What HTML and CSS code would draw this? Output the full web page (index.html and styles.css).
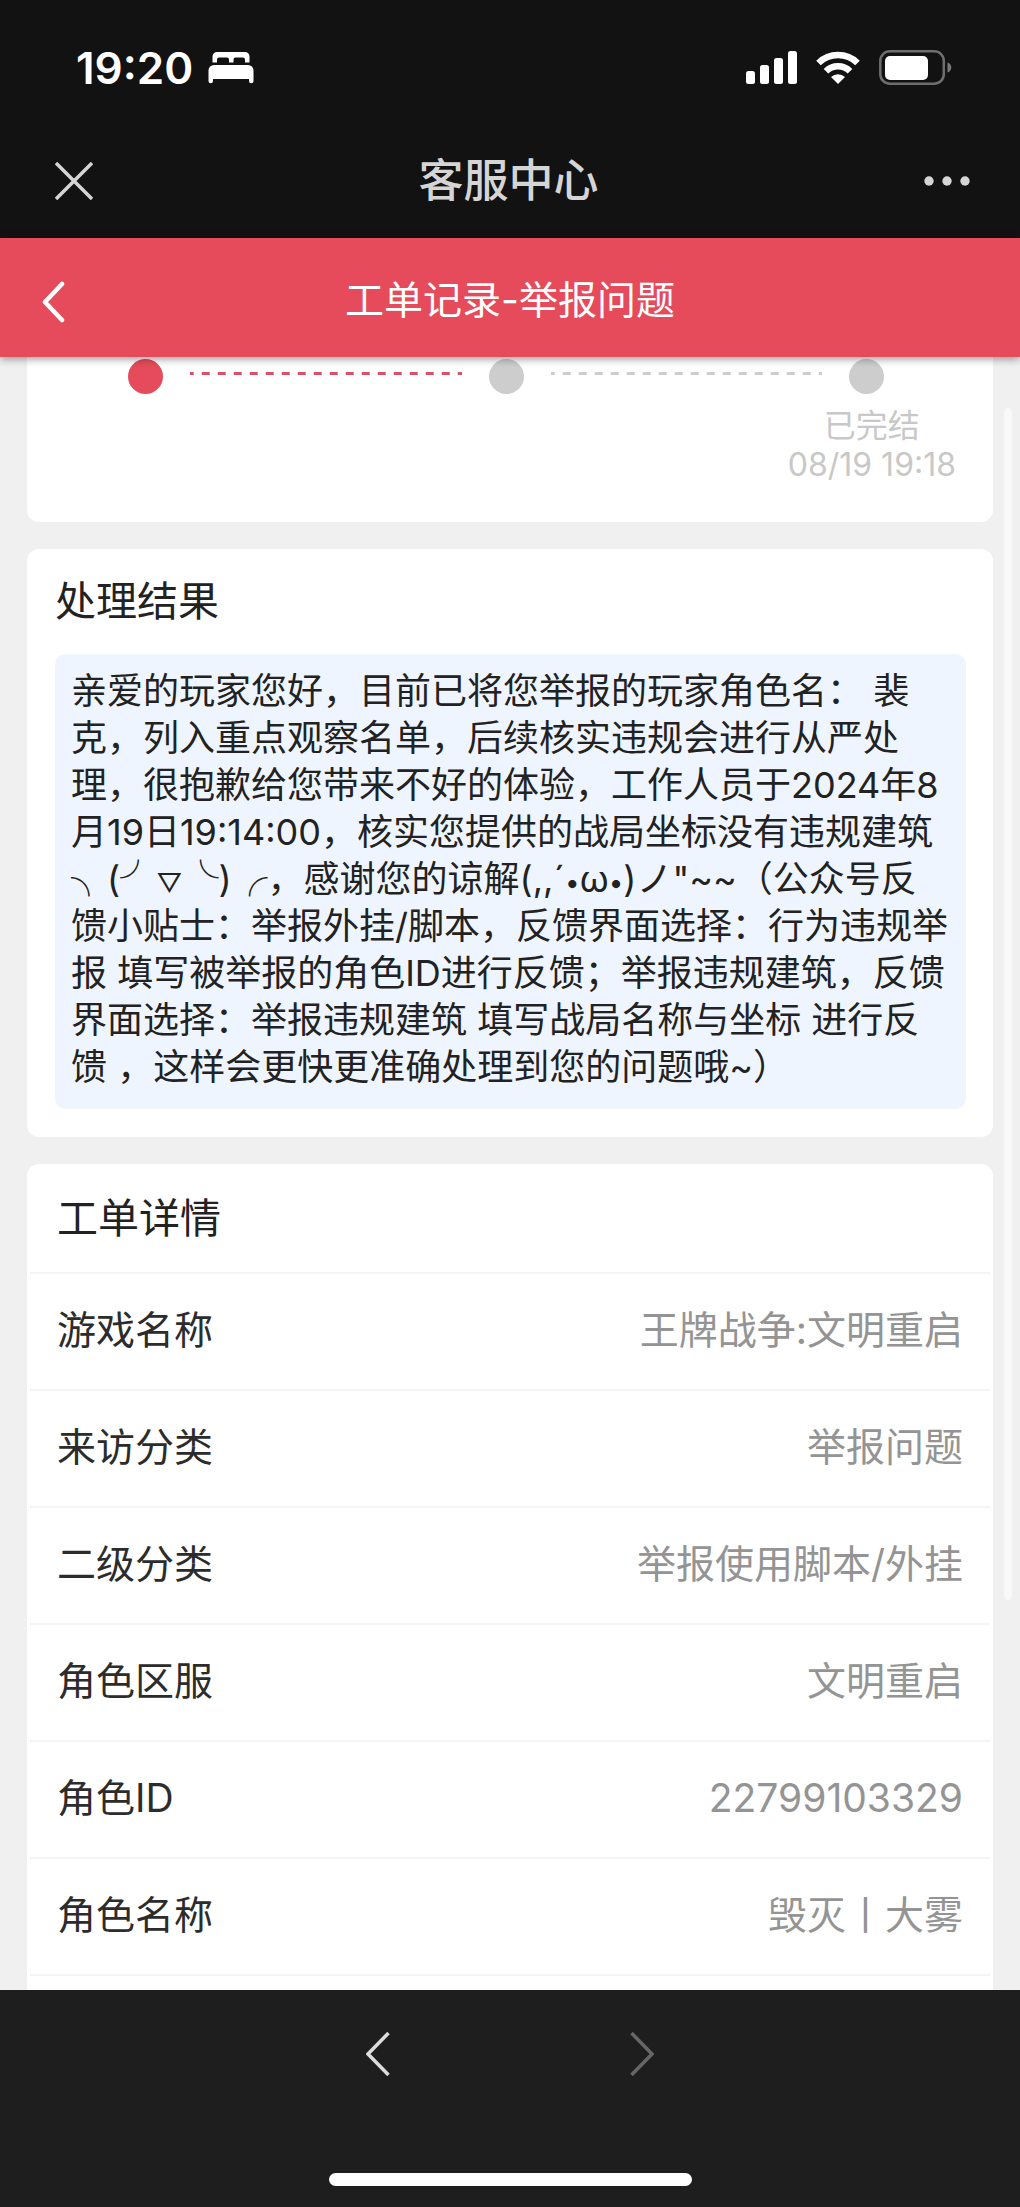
FILE: index.html
```html
<!DOCTYPE html>
<html lang="zh-CN">
<head>
  <meta charset="UTF-8">
  <meta name="viewport" content="width=device-width, initial-scale=1.0">
  <title>客服中心</title>
  <link rel="stylesheet" href="styles.css">
</head>
<body>

  <div class="status-bar">
    <div class="status-left">
      <span class="time">19:20</span>
      <svg width="46" height="32" viewBox="0 0 46 32" fill="#fff">
        <path d="M9 0h28a4.500 4.500 0 0 1 4.500 4.500V10.500H37V7.500a2 2 0 0 0-2-2H27.500a2 2 0 0 0-2 2v3h-4.500v-3a2 2 0 0 0-2-2H11a2 2 0 0 0-2 2v3H4.500V4.500A4.500 4.500 0 0 1 9 0z"/>
        <path d="M6 13h34a5.500 5.500 0 0 1 5.500 5.500V29a2.200 2.200 0 0 1-4.500 0v-2H5v2a2.200 2.200 0 0 1-4.500 0V18.500A5.500 5.500 0 0 1 6 13z"/>
      </svg>
    </div>
    <div class="status-right">
      <svg width="51" height="33" viewBox="0 0 51 33" fill="#fff">
        <rect x="0" y="20" width="9" height="13" rx="2.500"/>
        <rect x="14" y="14" width="9" height="19" rx="2.500"/>
        <rect x="28" y="7" width="9" height="26" rx="2.500"/>
        <rect x="42" y="0" width="9" height="33" rx="2.500"/>
      </svg>
      <svg width="44" height="33" viewBox="0 0 44 33" fill="none" stroke="#fff">
        <path d="M2.500 12A28 28 0 0 1 41.500 12" stroke-width="6.500"/>
        <path d="M10 20.200A17 17 0 0 1 34 20.200" stroke-width="6.500"/>
        <path d="M22 33l-7-7a10.500 10.500 0 0 1 14 0z" fill="#fff" stroke="none"/>
      </svg>
      <svg width="73" height="35" viewBox="0 0 73 35">
        <rect x="1.300" y="1.300" width="63.500" height="32.400" rx="9.500" fill="none" stroke="#6e6e6e" stroke-width="2.500"/>
        <rect x="6" y="6" width="43" height="24" rx="5" fill="#fff"/>
        <path d="M68.500 12.500c5 1.500 5 8.500 0 10z" fill="#7a7a7a"/>
      </svg>
    </div>
  </div>

  <div class="nav-bar">
    <button type="button" aria-label="关闭">
      <svg width="38" height="38" viewBox="0 0 38 38" stroke="#d5d5d5" stroke-width="3.500">
        <path d="M1 1l36 36M37 1L1 37"/>
      </svg>
    </button>
    <h1>客服中心</h1>
    <button type="button" aria-label="更多">
      <svg width="46" height="10" viewBox="0 0 46 10" fill="#d5d5d5">
        <circle cx="5" cy="5" r="4.700"/>
        <circle cx="23" cy="5" r="4.700"/>
        <circle cx="41" cy="5" r="4.700"/>
      </svg>
    </button>
  </div>

  <header class="page-header">
    <button type="button" aria-label="返回">
      <svg width="24" height="42" viewBox="0 0 24 42" fill="none" stroke="#fff" stroke-width="4.500" stroke-linecap="round" stroke-linejoin="round">
        <path d="M20 3L3 21l17 18"/>
      </svg>
    </button>
    <h2>工单记录-举报问题</h2>
  </header>

  <main class="content">
    <!-- 进度 -->
    <section class="card progress">
      <div class="steps">
        <span class="dot active"></span>
        <span class="line active"></span>
        <span class="dot"></span>
        <span class="line"></span>
        <span class="dot"></span>
      </div>
      <div class="step-label">已完结<br>08/19 19:18</div>
    </section>

    <!-- 处理结果 -->
    <section class="card result">
      <h3>处理结果</h3>
      <p class="reply">
        亲爱的玩家您好，目前已将您举报的玩家角色名： 裴<br>
        克，列入重点观察名单，后续核实违规会进行从严处<br>
        理，很抱歉给您带来不好的体验，工作人员于2024年8<br>
        月19日19:14:00，核实您提供的战局坐标没有违规建筑<br>
        ╮(╯<span class="face">▽</span>╰)╭，感谢您的谅解(,,´<span class="face">•</span>ω<span class="face">•</span>)ノ"~~（公众号反<br>
        馈小贴士：举报外挂/脚本，反馈界面选择：行为违规举<br>
        报 填写被举报的角色ID进行反馈；举报违规建筑，反馈<br>
        界面选择：举报违规建筑 填写战局名称与坐标 进行反<br>
        馈 ，这样会更快更准确处理到您的问题哦~）
      </p>
    </section>

    <!-- 工单详情 -->
    <section class="card detail">
      <h3>工单详情</h3>
      <dl>
        <div class="row"><dt>游戏名称</dt><dd>王牌战争:文明重启</dd></div>
        <div class="row"><dt>来访分类</dt><dd>举报问题</dd></div>
        <div class="row"><dt>二级分类</dt><dd>举报使用脚本/外挂</dd></div>
        <div class="row"><dt>角色区服</dt><dd>文明重启</dd></div>
        <div class="row"><dt>角色ID</dt><dd>22799103329</dd></div>
        <div class="row"><dt>角色名称</dt><dd>毁灭丨大雾</dd></div>
        <div class="row"></div>
      </dl>
    </section>

    <div class="scrollbar"></div>
  </main>

  <footer class="bottom-bar">
    <div class="history">
      <button type="button" aria-label="后退">
        <svg width="24" height="44" viewBox="0 0 24 44" fill="none" stroke="#dcdcdc" stroke-width="3.500">
          <path d="M22.500 1L2 22l20.500 21"/>
        </svg>
      </button>
      <button type="button" aria-label="前进" disabled>
        <svg width="24" height="44" viewBox="0 0 24 44" fill="none" stroke="#666" stroke-width="3.500">
          <path d="M1.500 1L22 22L1.500 43"/>
        </svg>
      </button>
    </div>
    <div class="home-indicator"></div>
  </footer>

</body>
</html>
```

FILE: styles.css
```css
* { box-sizing: border-box; margin: 0; padding: 0; }
body {
  height: 100vh;
  display: flex; flex-direction: column;
  font-family: Inter, "Noto Sans CJK SC", sans-serif;
  background-color: #f0f0f0;
  color: #222;
}
svg { display: block; }
button { background: none; border: none; cursor: pointer; }

.status-bar {
  display: flex; justify-content: space-between; align-items: center;
  height: 121px; padding: 14px 68px 0 76px;
  background-color: #121212; color: #fff;
}
.status-left { display: flex; align-items: center; gap: 15px; }
.status-right { display: flex; align-items: center; gap: 19px; }
.time { font-size: 44px; font-weight: 600; line-height: 48px; }

.nav-bar {
  display: flex; justify-content: space-between; align-items: center;
  height: 117px; padding: 2px 50px 0 55px;
  background-color: #121212; color: #d5d5d5;
}
.nav-bar h1 { font-size: 45px; font-weight: 500; line-height: 60px; }

.page-header {
  position: relative; z-index: 1;
  display: flex; align-items: center;
  height: 119px; padding: 8px 42px 0;
  background-color: #e54b5a; color: #fff;
  box-shadow: 0 2px 8px rgba(0, 0, 0, 0.4);
}
.page-header h2 {
  flex: 1; margin-right: 24px; padding-bottom: 4px;
  font-size: 39px; font-weight: 400; line-height: 56px; text-align: center;
}

.content {
  position: relative;
  flex: 1; min-height: 0; overflow: hidden;
  padding: 0 27px;
}
.card {
  margin-bottom: 27px;
  background-color: #fff; border-radius: 12px;
}
.card h3 { font-size: 41px; font-weight: 400; }

.progress { padding: 2px 37px 38px; border-radius: 0 0 12px 12px; }
.steps { display: flex; padding: 0 72px 0 64px; }
.dot {
  width: 35px; height: 35px; border-radius: 50%;
  background-color: #cdcdcd;
}
.dot.active { background-color: #e54b5a; }
.line {
  flex: 1; height: 3px; margin: 13px 27px 0;
  color: #cdcdcd;
  background: linear-gradient(to right, currentColor 25%, transparent 25%, transparent 75%, currentColor 75%) center / 16px 3px repeat-x;
}
.line.active { color: #d9506a; }
.step-label {
  width: fit-content; margin: 12px 0 0 auto;
  font-size: 32px; line-height: 39px; text-align: center;
  color: #c8c8c8;
}

.result { padding: 0 27px 28px 28px; }
.result h3 { line-height: 105px; }
.reply {
  padding: 14px 16px 18px;
  background-color: #eff5ff; border-radius: 10px;
  font-size: 36px; line-height: 47px; white-space: nowrap;
}
.reply .face { font-size: 26px; line-height: 26px; }

.detail { padding: 0 3px; }
.detail h3 { padding-left: 27px; line-height: 108px; }
.row {
  display: flex; justify-content: space-between; align-items: center;
  height: 117px; padding: 0 27px 4px;
  border-top: 2px solid #f4f4f4;
  font-size: 39px; line-height: 56px;
}
.row dt { color: #2c2c2c; }
.row dd { color: #949494; }

.scrollbar {
  position: absolute; top: 51px; right: 8px;
  width: 8px; height: 73%;
  background-color: #f8f8f8; border-radius: 4px;
}

.bottom-bar {
  display: flex; flex-direction: column; justify-content: space-between; align-items: center;
  height: 217px; padding: 42px 0 21px;
  background-color: #1e1e1e;
}
.history { display: flex; gap: 240px; }
.home-indicator {
  width: 363px; height: 13px; border-radius: 7px;
  background-color: #fff;
}
```
